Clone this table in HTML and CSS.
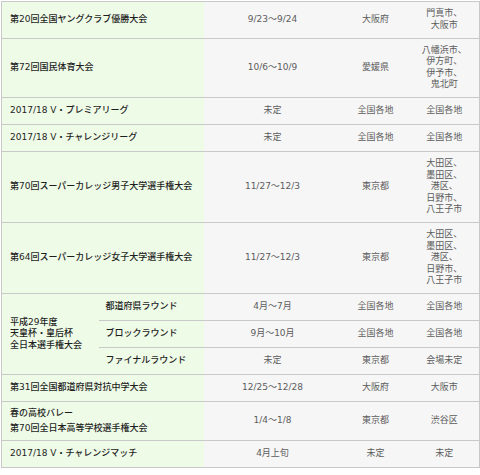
FILE: index.html
```html
<!DOCTYPE html>
<html lang="ja">
<head>
<meta charset="utf-8">
<title>大会日程</title>
<link rel="stylesheet" href="styles.css">
</head>
<body>
<table class="sched">
  <colgroup>
    <col class="c-label">
    <col class="c-sub">
    <col class="c-date">
    <col class="c-pref">
    <col class="c-city">
  </colgroup>
  <tbody>
    <tr>
      <td class="name" colspan="2">第20回全国ヤングクラブ優勝大会</td>
      <td class="date">9/23～9/24</td>
      <td class="pref">大阪府</td>
      <td class="city">門真市、<br>大阪市</td>
    </tr>
    <tr>
      <td class="name" colspan="2">第72回国民体育大会</td>
      <td class="date">10/6～10/9</td>
      <td class="pref">愛媛県</td>
      <td class="city">八幡浜市、<br>伊方町、<br>伊予市、<br>鬼北町</td>
    </tr>
    <tr>
      <td class="name" colspan="2">2017/18 V・プレミアリーグ</td>
      <td class="date">未定</td>
      <td class="pref">全国各地</td>
      <td class="city">全国各地</td>
    </tr>
    <tr>
      <td class="name" colspan="2">2017/18 V・チャレンジリーグ</td>
      <td class="date">未定</td>
      <td class="pref">全国各地</td>
      <td class="city">全国各地</td>
    </tr>
    <tr>
      <td class="name" colspan="2">第70回スーパーカレッジ男子大学選手権大会</td>
      <td class="date">11/27～12/3</td>
      <td class="pref">東京都</td>
      <td class="city">大田区、<br>墨田区、<br>港区、<br>日野市、<br>八王子市</td>
    </tr>
    <tr>
      <td class="name" colspan="2">第64回スーパーカレッジ女子大学選手権大会</td>
      <td class="date">11/27～12/3</td>
      <td class="pref">東京都</td>
      <td class="city">大田区、<br>墨田区、<br>港区、<br>日野市、<br>八王子市</td>
    </tr>
    <tr>
      <td class="name group" rowspan="3">平成29年度<br>天皇杯・皇后杯<br>全日本選手権大会</td>
      <td class="name sub">都道府県ラウンド</td>
      <td class="date">4月～7月</td>
      <td class="pref">全国各地</td>
      <td class="city">全国各地</td>
    </tr>
    <tr>
      <td class="name sub">ブロックラウンド</td>
      <td class="date">9月～10月</td>
      <td class="pref">全国各地</td>
      <td class="city">全国各地</td>
    </tr>
    <tr>
      <td class="name sub">ファイナルラウンド</td>
      <td class="date">未定</td>
      <td class="pref">東京都</td>
      <td class="city">会場未定</td>
    </tr>
    <tr>
      <td class="name" colspan="2">第31回全国都道府県対抗中学大会</td>
      <td class="date">12/25～12/28</td>
      <td class="pref">大阪府</td>
      <td class="city">大阪市</td>
    </tr>
    <tr>
      <td class="name loose" colspan="2">春の高校バレー<br>第70回全日本高等学校選手権大会</td>
      <td class="date">1/4～1/8</td>
      <td class="pref">東京都</td>
      <td class="city">渋谷区</td>
    </tr>
    <tr>
      <td class="name" colspan="2">2017/18 V・チャレンジマッチ</td>
      <td class="date">4月上旬</td>
      <td class="pref">未定</td>
      <td class="city">未定</td>
    </tr>
  </tbody>
</table>
</body>
</html>
```

FILE: styles.css
```css
html, body {
  margin: 0;
  padding: 0;
  background: #ffffff;
}

body {
  font-family: "DejaVu Sans", "Noto Sans CJK JP", sans-serif;
  font-size: 9px;
  line-height: 11.5px;
  color: #5c5c5c;
}

.sched {
  margin: 1px 0 0 1px;
  width: 478px;
  table-layout: fixed;
  border-collapse: collapse;
  border: 1px solid #c9c9c9;
}

.c-label { width: 97px; }
.c-sub { width: 105px; }
.c-date { width: 138px; }
.c-pref { width: 68px; }
.c-city { width: 70px; }

.sched tr {
  height: 27px;
}

.sched td {
  padding: 6.25px 4px;
  border-top: 1px solid #c9c9c9;
  background: #f6f6f6;
  text-align: center;
  vertical-align: middle;
  white-space: nowrap;
}

.sched td.name {
  background: #eefbe7;
  color: #1e1e1e;
  font-weight: 500;
  text-align: left;
  padding-left: 8px;
}

.sched td.sub {
  padding-left: 7px;
}

.sched td.loose {
  line-height: 15px;
  padding-top: 4px;
  padding-bottom: 4px;
}

.sched td.date {
  padding-left: 0;
  padding-right: 0;
}
```
